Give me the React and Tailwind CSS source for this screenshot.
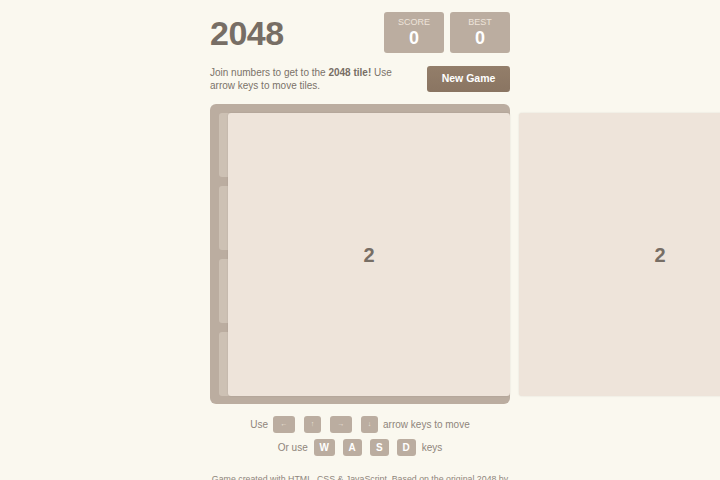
import React from 'react';

const cells = Array.from({ length: 16 });

const tiles = [
  { id: 1, value: 2, left: 18, top: 9 },
  { id: 2, value: 2, left: 309, top: 9 },
];

const Key = ({ children, w }) => (
  <span
    className={`inline-flex h-[17px] items-center justify-center rounded-[3px] bg-[#bbada0] text-[7px] text-[#ece4da] ${w}`}
  >
    {children}
  </span>
);

const Letter = ({ children, w }) => (
  <span
    className={`inline-flex h-[17px] items-center justify-center rounded-[3px] bg-[#bbada0] text-[10px] font-bold text-white ${w}`}
  >
    {children}
  </span>
);

const App = () => {
  return (
    <div
      className="h-screen w-full overflow-hidden bg-[#faf8ef] text-[#776e65]"
      style={{ fontFamily: '"Liberation Sans", Arial, sans-serif' }}
    >
      <div className="mx-auto w-[300px] pt-3">
        <div className="flex h-[41px] items-center justify-between">
          <h1 className="text-[34px] font-bold leading-none tracking-[-0.5px]">2048</h1>
          <div className="flex gap-[6px]">
            <div className="flex h-[41px] w-[60px] flex-col items-center justify-center rounded-[3px] bg-[#bbada0]">
              <span className="text-[9px] leading-none text-[#eee4da]">SCORE</span>
              <span className="mt-[2px] text-[18px] font-bold leading-none text-white">0</span>
            </div>
            <div className="flex h-[41px] w-[60px] flex-col items-center justify-center rounded-[3px] bg-[#bbada0]">
              <span className="text-[9px] leading-none text-[#eee4da]">BEST</span>
              <span className="mt-[2px] text-[18px] font-bold leading-none text-white">0</span>
            </div>
          </div>
        </div>

        <div className="mt-[13px] flex h-[26px] items-center justify-between">
          <p className="w-[185px] text-[10px] leading-[13px] text-[#7b7269]">
            Join numbers to get to the <strong className="text-[#776e65]">2048 tile!</strong> Use arrow keys to move tiles.
          </p>
          <button className="h-[26px] w-[83px] rounded-[3px] bg-gradient-to-b from-[#937e6a] to-[#8a7562] text-[10.5px] font-bold text-white">
            New Game
          </button>
        </div>

        <div className="relative mt-3 h-[300px] w-[300px] rounded-[6px] bg-[#bbada0] p-[9px]">
          <div className="grid grid-cols-4 gap-[9px]">
            {cells.map((_, i) => (
              <div key={i} className="h-[64px] rounded-[3px] bg-[#cdc1b4]" />
            ))}
          </div>
          {tiles.map((t) => (
            <div
              key={t.id}
              className="absolute flex h-[283px] w-[282px] items-center justify-center rounded-[3px] bg-[#eee4da] text-[20px] font-bold text-[#776e65] shadow-[0_0_2px_rgba(0,0,0,0.12)]"
              style={{ left: t.left, top: t.top }}
            >
              {t.value}
            </div>
          ))}
        </div>

        <div className="mt-3 flex flex-col items-center gap-[6px] text-[10px] text-[#8f857b]">
          <div className="flex items-center gap-[9px]">
            <span className="mr-[-4px]">Use</span>
            <Key w="w-[22px]">←</Key>
            <Key w="w-[17px]">↑</Key>
            <Key w="w-[22px]">→</Key>
            <Key w="w-[17px]">↓</Key>
            <span className="ml-[-4px]">arrow keys to move</span>
          </div>
          <div className="flex items-center gap-[8px]">
            <span className="mr-[-2px]">Or use</span>
            <Letter w="w-[21px]">W</Letter>
            <Letter w="w-[19px]">A</Letter>
            <Letter w="w-[19px]">S</Letter>
            <Letter w="w-[19px]">D</Letter>
            <span className="ml-[-2px]">keys</span>
          </div>
        </div>

        <p className="mt-[17px] text-center text-[8.8px] leading-[12px] text-[#8f857b]">
          Game created with HTML, CSS &amp; JavaScript. Based on the original 2048 by Gabriele Cirulli.
        </p>
      </div>
    </div>
  );
};

export default App;
